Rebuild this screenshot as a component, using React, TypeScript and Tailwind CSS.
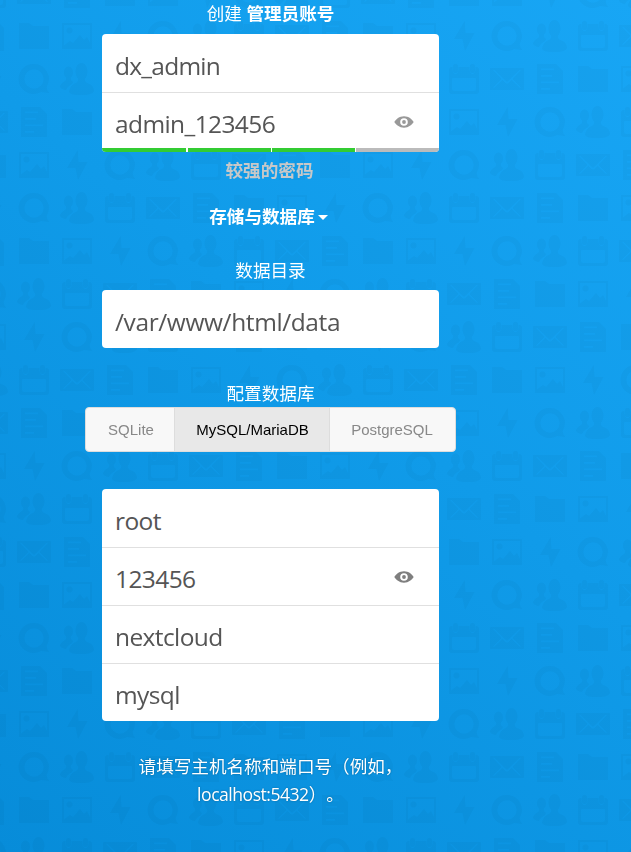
import type { ReactNode } from "react";

const UI = 'font-["Open_Sans","Noto_Sans_CJK_SC",sans-serif]';
const CELL = 43;

// Glyphs of the wallpaper, each centred on its own origin:
// mail, document, folder, image, bolt, chat, people, calendar.
const glyphs: ReactNode[] = [
  <path fillRule="evenodd" d="M-16-11H16Q17-11 17-10V10Q17 11 16 11H-16Q-17 11-17 10V-10Q-17-11-16-11ZM-14-9L-5.500 0L-14 8.500L-13 9L-4.500 1L-1.500 4Q0 5 1.500 4L4.500 1L13 9L14 8.500L5.500 0L14-9L13-9.500L1 2Q0 3-1 2L-13-9.500Z" />,
  <path fillRule="evenodd" d="M-13-15H6L13-8V15H-13ZM-9-10.500V-8.800H4V-10.500ZM-9-4V-2.300H2V-4ZM-9 2.500V4.300H9V2.500ZM-9 9V10.700H0V9Z" />,
  <path d="M-15-13H-5L-1-10H15V13H-15Z" />,
  <path fillRule="evenodd" d="M-15-13H15V13H-15ZM-13-11V9.500L-7 5L-4 7L3-1L7 4L10 1L13 7V-11ZM-7.500-8.500A3 3 0 1 1-7.500-2.500A3 3 0 1 1-7.500-8.500Z" />,
  <path d="M.7-15L-10 3H-1.500L1 15L10.500-3H1.500Z" />,
  <path fillRule="evenodd" d="M0-15A15 15 0 0 1 12.500 8Q13 12 15.500 14L7 13A15 15 0 1 1 0-15ZM0-9.700A9.700 9.700 0 1 0 0 9.700A9.700 9.700 0 1 0 0-9.700Z" />,
  <g>
    <ellipse cx="4.500" cy="-7.500" rx="6" ry="8.500" />
    <path d="M1-2H8Q7 3 10 4Q17 6 17 12Q16 15 8 16H1Q-6 16-8 13Q-7 6-1 4Q2 2 1-2Z" />
    <ellipse cx="-8.500" cy="-6.500" rx="4.500" ry="6" />
    <path d="M-11-3H-6Q-7 2-4 3L-5 5Q-10 8-11 11Q-17 10-17 7Q-16 4-12 2Q-10 1-11-3Z" />
  </g>,
  <g>
    <path fillRule="evenodd" d="M-12-12H-11.500V-9Q-11-5-8.500-5T-5.500-9V-12H5.500V-9Q6-5 8.500-5T11.500-9V-12H12Q15-12 15-9V12Q15 15 12 15H-12Q-15 15-15 12V-9Q-15-12-12-12ZM-12 0V10Q-12 12-10 12H10Q12 12 12 10V0Q12-1 11-1H-11Q-12-1-12 0Z" />
    <rect x="-11" y="-15" width="5" height="9" rx="2.500" />
    <rect x="6" y="-15" width="5" height="9" rx="2.500" />
  </g>,
];

// Glyph index at the first column of every row.
const rowStart = [0, 2, 5, 1, 3, 5, 2, 6, 4, 7, 1, 4, 6];

function Wallpaper() {
  const cells: ReactNode[] = [];
  for (let r = -1; r < 20; r++) {
    for (let k = -1; k < 15; k++) {
      const index = (rowStart[(r + 1) % 13] + k + 8) % 8;
      cells.push(
        <g key={`${r}:${k}`} transform={`translate(${34 + CELL * k} ${36 + CELL * r})`}>
          {glyphs[index]}
        </g>,
      );
    }
  }
  return (
    <svg className="absolute inset-0 h-full w-full" viewBox="0 0 631 852" aria-hidden="true">
      <g fill="#000" opacity="0.026">{cells}</g>
    </svg>
  );
}

function Eye({ className }: { className: string }) {
  return (
    <svg className={`h-3 w-5 ${className}`} viewBox="0 0 20 12" aria-hidden="true">
      <path
        fill="currentColor"
        fillRule="evenodd"
        d="M10 .3C5.300 .3 2 3.300 .3 6C2 8.700 5.300 11.700 10 11.700S18 8.700 19.700 6C18 3.300 14.700 .3 10 .3ZM10 2.200A3.800 3.800 0 1 1 10 9.800A3.800 3.800 0 1 1 10 2.200Z"
      />
      <circle cx="10" cy="6" r="1.900" fill="currentColor" />
    </svg>
  );
}

function Field({ value, tracking = "tracking-[-0.6px]", divided = false, eye }: { value: string; tracking?: string; divided?: boolean; eye?: string }) {
  return (
    <div className={`flex h-[58px] items-center justify-between pt-[5px] pr-[25px] pl-[13px] ${divided ? "border-t border-[#e0e0e0]" : ""}`}>
      <span className={`text-[24.500px] leading-8 whitespace-nowrap text-[#555] ${tracking}`}>{value}</span>
      {eye && <Eye className={`-mt-1 ${eye}`} />}
    </div>
  );
}

export default function App() {
  return (
    <div className={`relative h-[852px] w-[631px] overflow-hidden bg-linear-[40deg,#078cd9_0%,#109be9_55%,#18a6f5_100%] ${UI}`}>
      <Wallpaper />
      <main className="relative -mt-px ml-[85px] flex w-[371px] flex-col items-center text-[17.600px] leading-7 text-white">
        <h2 className="h-[35px] whitespace-nowrap">
          创建 <b>管理员账号</b>
        </h2>
        <section className="h-[118px] w-[337px] overflow-hidden rounded bg-white">
          <Field value="dx_admin" tracking="tracking-[-0.75px]" />
          <div className="h-14">
            <Field value="admin_123456" divided eye="text-[#999]" />
          </div>
          <div className="flex h-1 gap-px">
            <i className="mr-px w-[84px] bg-[#33cc33]" />
            <i className="w-[83px] bg-[#33cc33]" />
            <i className="w-[83px] bg-[#33cc33]" />
            <i className="flex-1 bg-[#bbb]" />
          </div>
        </section>
        <p className="mt-1 mr-0.5 font-bold text-[#c8c8c8]">较强的密码</p>
        <button className="mt-[18px] mr-1 flex items-center gap-[3px] font-bold">
          存储与数据库
          <span className="mt-[3px] border-x-[5px] border-t-[5px] border-x-transparent border-t-white" />
        </button>
        <label className="mt-[26px]">数据目录</label>
        <section className="mt-1.5 h-[58px] w-[337px] rounded bg-white">
          <Field value="/var/www/html/data" tracking="tracking-[-0.4px]" />
        </section>
        <label className="mt-[31px] h-7">配置数据库</label>
        <div className='flex h-[45px] w-full overflow-hidden rounded border border-[#ddd] bg-[#f8f8f8] font-["Liberation_Sans",sans-serif] text-[15px] text-[#888]'>
          <button className="w-[89px] border-r border-[#ddd] pl-0.5">SQLite</button>
          <button className="w-[155px] border-r border-[#ddd] bg-[#e8e8e8] pl-px text-black">MySQL/MariaDB</button>
          <button className="flex-1 pr-px">PostgreSQL</button>
        </div>
        <section className="mt-[37px] h-[232px] w-[337px] rounded bg-white">
          <Field value="root" />
          <Field value="123456" divided eye="text-[#7f7f7f]" />
          <Field value="nextcloud" divided />
          <Field value="mysql" divided />
        </section>
        <p className="mt-[31px] w-[320px] text-center [text-shadow:0_0_2px_rgba(0,0,0,0.3)] [text-spacing-trim:space-all]">
          请填写主机名称和端口号（例如，
          <br />
          <span className="tracking-[-0.5px]">localhost:5432</span>）。
        </p>
      </main>
    </div>
  );
}
